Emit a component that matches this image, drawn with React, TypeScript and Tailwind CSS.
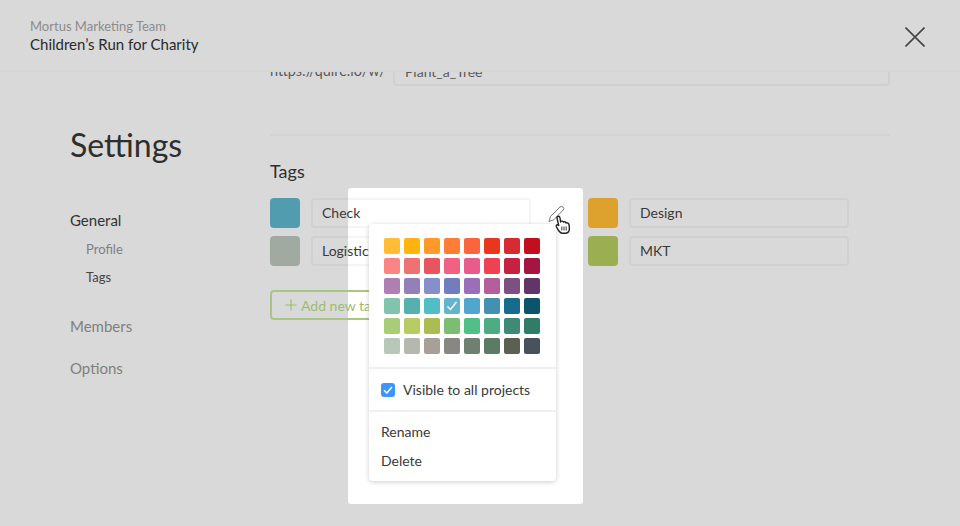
import React from 'react';

const swatches = [
    ['#ffbc36', '#ffb30f', '#ff9a2a', '#ff7d37', '#fb653d', '#e9371f', '#d62b33', '#c10f1f'],
    ['#fb8585', '#ee7370', '#e6565c', '#f06182', '#e85b8b', '#ee4253', '#c4233f', '#a41542'],
    ['#b07eb2', '#9480b6', '#8590c8', '#727dbd', '#9a6eb8', '#b45f9c', '#7c5182', '#613568'],
    ['#82c3ad', '#56b0ae', '#50bec2', '#62b5cb', '#52a5cc', '#4390b0', '#176b8c', '#0b5469'],
    ['#a9cc79', '#b7cc62', '#abbc53', '#7bbd72', '#50bf88', '#4dac83', '#3f8a75', '#317c66'],
    ['#b9c6ba', '#b5b8b0', '#a89f97', '#888784', '#6f8072', '#5b7b65', '#5a6153', '#48525c'],
];

const TagInput = ({ color, name }: { color: string; name: string }) => (
    <div className="flex items-center gap-[11px]">
        <div className="h-[30px] w-[30px] rounded-[4px]" style={{ backgroundColor: color }} />
        <div className="flex h-[30px] w-[220px] items-center rounded-[4px] border-2 border-black/[0.04] pb-[2px] pl-[9px] text-[14px] text-[#3a3a3a]">
            {name}
        </div>
    </div>
);

const App = () => {
    return (
        <div className="relative flex h-[526px] w-[960px] flex-col overflow-hidden bg-[#d9d9d9] font-[Lato,sans-serif] antialiased">
            <div className="absolute top-[188px] left-[348px] h-[316px] w-[235px] rounded-[3px] bg-white" />

            <header className="relative z-10 flex h-[72px] shrink-0 items-start justify-between border-b-2 border-[#d5d5d5] bg-[#d9d9d9] pt-[18px] pr-[35px] pl-[30px]">
                <div>
                    <div className="text-[13px] leading-[17px] text-[#8c8c8c]">Mortus Marketing Team</div>
                    <div className="text-[15px] leading-[19px] text-[#2a2a2a]">Children’s Run for Charity</div>
                </div>
                <svg width="20" height="20" viewBox="0 0 20 20" className="mt-[9px]" fill="none" stroke="#444" strokeWidth="1.6">
                    <path d="M0.5 0.5 L19.5 19.5 M19.5 0.5 L0.5 19.5" />
                </svg>
            </header>

            <main className="relative flex min-h-0 flex-1">
                <nav className="w-[270px] shrink-0 pt-[53px] pl-[70px]">
                    <h1 className="text-[32px] leading-[40px] text-[#2e2e2e]">Settings</h1>
                    <div className="mt-[45px] text-[15px] leading-[20px] text-[#333]">General</div>
                    <div className="mt-[9px] pl-[16px] text-[13px] leading-[20px] text-[#808080]">Profile</div>
                    <div className="mt-[8px] pl-[16px] text-[13px] leading-[20px] text-[#444]">Tags</div>
                    <div className="mt-[29px] text-[15px] leading-[20px] text-[#808080]">Members</div>
                    <div className="mt-[22px] text-[15px] leading-[20px] text-[#808080]">Options</div>
                </nav>

                <section className="mt-[-16px] w-[620px]">
                    <div className="flex items-center gap-[8px] text-[14.4px] text-[#5a5a5a]">
                        <span className="w-[115px]">https://quire.io/w/</span>
                        <div className="flex h-[30px] flex-1 items-center rounded-[4px] border-2 border-black/[0.04] pl-[10px] text-[14px]">
                            Plant_a_Tree
                        </div>
                    </div>
                    <div className="mt-[48px] h-[2px] bg-[#d3d3d3]" />
                    <h2 className="mt-[23px] text-[18px] leading-[24px] text-[#2e2e2e]">Tags</h2>
                    <div className="mt-[15px] flex flex-col gap-[8px]">
                        <div className="flex gap-[57px]">
                            <TagInput color="#529cb0" name="Check" />
                            <TagInput color="#dca22d" name="Design" />
                        </div>
                        <div className="flex gap-[57px]">
                            <TagInput color="#a0aaa0" name="Logistics" />
                            <TagInput color="#9cae52" name="MKT" />
                        </div>
                    </div>
                    <button className="mt-[24px] flex h-[30px] w-[140px] items-center gap-[3px] rounded-[4px] border-2 border-[#a8c682] pl-[12px] text-[14px] text-[#9cbd70]">
                        <svg width="14" height="14" viewBox="0 0 14 14" fill="none" stroke="#9cbd70" strokeWidth="1.2">
                            <path d="M7 1.5 V12.5 M1.5 7 H12.5" />
                        </svg>
                        Add new tag
                    </button>
                </section>
            </main>

            <svg width="26" height="30" viewBox="0 0 26 30" className="absolute top-[205px] left-[547px] z-20">
                <path d="M2 16.5 L3.5 11.5 L13 2 Q14.5 0.8 16 2 Q17.5 3.5 16.2 5 L6.8 14.8 Z" fill="#fff" stroke="#777" strokeWidth="1" />
                <path d="M10 13 C9.6 10.6 12.8 10.6 13 13 L13.6 16.6 C14.6 15.8 16 16 16.4 17 C17.4 16.4 18.8 16.8 19 17.8 C20.4 17.4 21.8 18.2 22 19.6 L22.4 23 C22.6 26 20.8 28 18.6 28.2 L15 28.2 C13.4 28 12.8 27.2 12 26 L9.4 21.8 C8.6 20.4 10.2 19.2 11.4 20.2 L11.8 20.8 Z" fill="#fff" stroke="#222" strokeWidth="1.4" />
                <path d="M14.8 21.5 V25.5 M17 21.5 V25.5 M19.2 21.5 V25.5" stroke="#222" strokeWidth="0.9" />
            </svg>

            <div className="absolute top-[224px] left-[369px] z-10 h-[257px] w-[187px] rounded-[4px] bg-white text-[14px] text-[#3a3a3a] shadow-[0_1px_5px_rgba(0,0,0,0.2)]">
                <div className="flex h-[145px] flex-col gap-[4px] border-b-2 border-[#f0f0f0] pt-[14px] pl-[15px]">
                    {swatches.map((row, r) => (
                        <div key={r} className="flex gap-[4px]">
                            {row.map((color, c) => (
                                <div
                                    key={c}
                                    className="flex h-[16px] w-[16px] items-center justify-center rounded-[2px]"
                                    style={{ backgroundColor: color }}
                                >
                                    {r === 3 && c === 3 && (
                                        <svg width="12" height="10" viewBox="0 0 12 10" fill="none" stroke="#fff" strokeWidth="1.5">
                                            <path d="M1.5 5.5 L4.5 8.5 L10.5 1" />
                                        </svg>
                                    )}
                                </div>
                            ))}
                        </div>
                    ))}
                </div>
                <label className="flex h-[43px] items-center gap-[8px] border-b-2 border-[#f0f0f0] pl-[12px]">
                    <span className="flex h-[14px] w-[14px] items-center justify-center rounded-[3px] bg-[#3b97f7]">
                        <svg width="10" height="8" viewBox="0 0 10 8" fill="none" stroke="#fff" strokeWidth="1.5">
                            <path d="M1 4.2 L3.8 7 L9 1" />
                        </svg>
                    </span>
                    Visible to all projects
                </label>
                <div className="flex flex-col gap-[9px] pt-[10px] pl-[12px] leading-[20px]">
                    <div>Rename</div>
                    <div>Delete</div>
                </div>
            </div>
        </div>
    );
};

export default App;
